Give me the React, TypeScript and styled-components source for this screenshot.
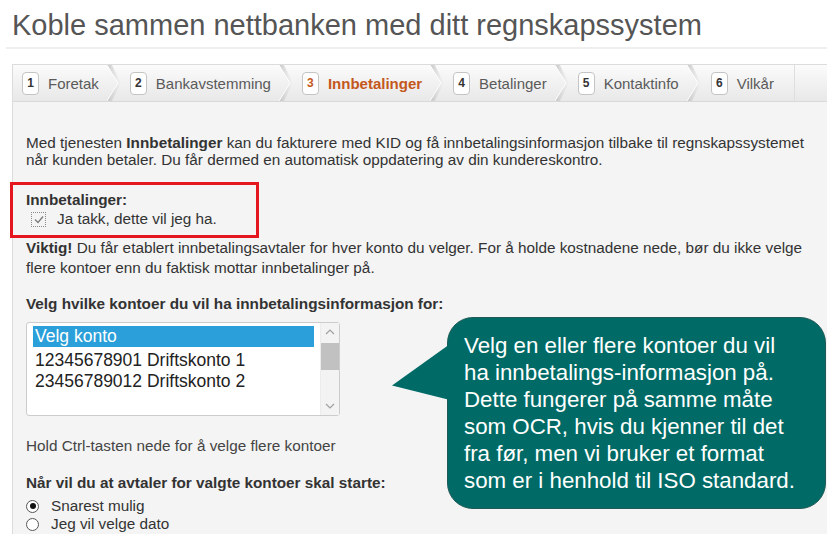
import React from "react";
import styled, { createGlobalStyle } from "styled-components";

const GlobalStyle = createGlobalStyle`
  html, body {
    margin: 0;
    padding: 0;
    background: #ffffff;
    overflow: hidden;
  }
  body {
    font-family: "Liberation Sans", Arial, sans-serif;
    color: #333333;
  }
`;

const Page = styled.div`
  position: relative;
  width: 827px;
  height: 534px;
  overflow: hidden;
`;

const Title = styled.h1`
  margin: 8px 0 0 12px;
  font-size: 29px;
  line-height: 34px;
  font-weight: normal;
  color: #555555;
  white-space: nowrap;
`;

const Rule = styled.div`
  margin: 5px 0 0 6px;
  border-top: 2px solid #efefef;
`;

const Panel = styled.div`
  margin: 15px 0 0 12px;
  background: #f4f4f4;
  border: 1px solid #dcdcdc;
  border-right: none;
  height: 480px;
`;

const TabBar = styled.div`
  display: flex;
  height: 36px;
  background: linear-gradient(#fbfbfb, #e8e8e8);
  border-bottom: 1px solid #d9d9d9;
`;

const Tab = styled.div<{ $last?: boolean }>`
  display: flex;
  align-items: center;
  padding-left: ${p => (p.$last ? "10px" : "9px")};
  padding-right: ${p => (p.$last ? "12px" : "0")};
  border-right: ${p => (p.$last ? "1px solid #dedede" : "none")};
  font-size: 15px;
`;

const Badge = styled.span<{ $active?: boolean }>`
  display: inline-flex;
  align-items: center;
  justify-content: center;
  width: 15px;
  height: 21px;
  border: 1px solid #c4c4c4;
  border-radius: 4px;
  background: #ffffff;
  font-size: 12px;
  font-weight: bold;
  color: ${p => (p.$active ? "#c4581c" : "#333333")};
`;

const TabLabel = styled.span<{ $active?: boolean }>`
  margin-left: 9px;
  margin-right: 8px;
  color: ${p => (p.$active ? "#c4581c" : "#5a5a5a")};
  font-weight: ${p => (p.$active ? "bold" : "normal")};
  white-space: nowrap;
`;

const Chevron = () => (
  <svg width="14" height="36" viewBox="0 0 14 36">
    <defs>
      <linearGradient id="chev" x1="0" x2="1" y1="0" y2="0">
        <stop offset="0" stopColor="#c4c4c4" />
        <stop offset="1" stopColor="#d8d8d8" stopOpacity="0" />
      </linearGradient>
    </defs>
    <path d="M0 0 L11 18 L0 36 L5 36 L14 18 L5 0 Z" fill="url(#chev)" />
    <path d="M0 0 L11 18 L0 36" fill="none" stroke="#fdfdfd" strokeWidth="1" />
  </svg>
);

const Content = styled.div`
  padding: 32px 0 0 13px;
  font-size: 15.3px;
`;

const Para = styled.p<{ $lh?: number }>`
  margin: 0;
  line-height: ${p => p.$lh ?? 17}px;
  white-space: nowrap;
`;

const Highlight = styled.div`
  margin: 14px 0 0 -16px;
  width: 230px;
  border: 3px solid #e5161e;
  padding: 6px 0 5px 13px;
`;

const Heading = styled.div<{ $mt?: number }>`
  margin-top: ${p => p.$mt ?? 0}px;
  font-weight: bold;
  line-height: 17px;
  white-space: nowrap;
`;

const CheckRow = styled.label`
  display: flex;
  align-items: center;
  height: 22px;
  padding-left: 5px;
`;

const CheckBox = styled.span`
  display: inline-flex;
  align-items: center;
  justify-content: center;
  width: 13px;
  height: 13px;
  border: 1px dotted #8a8a8a;
  margin-right: 11px;
`;

const ListBox = styled.div`
  display: flex;
  margin-top: 10px;
  width: 312px;
  height: 92px;
  background: #ffffff;
  border: 1px solid #cccccc;
  border-radius: 3px;
  font-size: 17.5px;
`;

const Options = styled.div`
  flex: 1;
  padding: 3px 6px 0 6px;
`;

const Option = styled.div<{ $selected?: boolean }>`
  height: 21px;
  line-height: 21px;
  padding-left: 2px;
  color: ${p => (p.$selected ? "#ffffff" : "#222222")};
  background: ${p => (p.$selected ? "#2b9fd9" : "transparent")};
  margin-bottom: ${p => (p.$selected ? "3px" : "0")};
  white-space: nowrap;
`;

const ScrollTrack = styled.div`
  display: flex;
  flex-direction: column;
  width: 18px;
  background: #f3f3f3;
  border-left: 1px solid #ececec;
`;

const ScrollArrow = styled.div`
  display: flex;
  align-items: center;
  justify-content: center;
  height: 18px;
`;

const ScrollThumb = styled.div`
  margin-top: 2px;
  height: 27px;
  background: #c1c1c1;
`;

const ScrollGap = styled.div`
  flex: 1;
`;

const Hint = styled.div`
  margin-top: 21px;
  line-height: 17px;
  color: #444444;
  white-space: nowrap;
`;

const RadioGroup = styled.div`
  margin-top: 6px;
`;

const RadioRow = styled.label`
  display: flex;
  align-items: center;
  height: 18px;
`;

const Radio = styled.span<{ $checked?: boolean }>`
  position: relative;
  display: inline-block;
  box-sizing: border-box;
  width: 13px;
  height: 13px;
  border: 1px solid #555555;
  border-radius: 50%;
  background: #ffffff;
  margin-right: 12px;
  &::after {
    content: "";
    display: ${p => (p.$checked ? "block" : "none")};
    position: absolute;
    left: 2.5px;
    top: 2.5px;
    width: 6px;
    height: 6px;
    border-radius: 50%;
    background: #111111;
  }
`;

const Callout = styled.div`
  position: absolute;
  left: 447px;
  top: 317px;
  width: 345px;
  height: 162px;
  padding: 14px 16px 14px 16px;
  background: #006b66;
  border: 1px solid #1f5a57;
  border-radius: 26px;
  color: #ffffff;
  font-size: 22.3px;
  line-height: 27px;
  white-space: nowrap;
  &::before {
    content: "";
    position: absolute;
    left: -56px;
    top: 26px;
    width: 58px;
    height: 56px;
    background: #006b66;
    clip-path: polygon(100% 0, 0 74%, 100% 100%);
  }
`;

const tabs = [
  "Foretak",
  "Bankavstemming",
  "Innbetalinger",
  "Betalinger",
  "Kontaktinfo",
  "Vilkår"
];

export default function App() {
  return (
    <>
      <GlobalStyle />
      <Page>
        <Title>Koble sammen nettbanken med ditt regnskapssystem</Title>
        <Rule />
        <Panel>
          <TabBar>
            {tabs.map((label, i) => {
              const active = i === 2;
              const last = i === tabs.length - 1;
              return (
                <React.Fragment key={label}>
                  <Tab $last={last}>
                    <Badge $active={active}>{i + 1}</Badge>
                    <TabLabel $active={active}>{label}</TabLabel>
                  </Tab>
                  {!last && <Chevron />}
                </React.Fragment>
              );
            })}
          </TabBar>
          <Content>
            <Para>
              Med tjenesten <b>Innbetalinger</b> kan du fakturere med KID og få
              innbetalingsinformasjon tilbake til regnskapssystemet
              <br />
              når kunden betaler. Du får dermed en automatisk oppdatering av din
              kundereskontro.
            </Para>
            <Highlight>
              <Heading>Innbetalinger:</Heading>
              <CheckRow>
                <CheckBox>
                  <svg width="10" height="9" viewBox="0 0 10 9">
                    <path
                      d="M1 4.5 L4 7.5 L9 1.5"
                      fill="none"
                      stroke="#7a7a7a"
                      strokeWidth="1.3"
                    />
                  </svg>
                </CheckBox>
                Ja takk, dette vil jeg ha.
              </CheckRow>
            </Highlight>
            <Para $lh={20}>
              <b>Viktig!</b> Du får etablert innbetalingsavtaler for hver konto
              du velger. For å holde kostnadene nede, bør du ikke velge
              <br />
              flere kontoer enn du faktisk mottar innbetalinger på.
            </Para>
            <Heading $mt={17}>
              Velg hvilke kontoer du vil ha innbetalingsinformasjon for:
            </Heading>
            <ListBox>
              <Options>
                <Option $selected>Velg konto</Option>
                <Option>12345678901 Driftskonto 1</Option>
                <Option>23456789012 Driftskonto 2</Option>
              </Options>
              <ScrollTrack>
                <ScrollArrow>
                  <svg width="10" height="6" viewBox="0 0 10 6">
                    <path d="M1 5 L5 1 L9 5" fill="none" stroke="#a0a0a0" strokeWidth="1.2" />
                  </svg>
                </ScrollArrow>
                <ScrollThumb />
                <ScrollGap />
                <ScrollArrow>
                  <svg width="10" height="6" viewBox="0 0 10 6">
                    <path d="M1 1 L5 5 L9 1" fill="none" stroke="#a0a0a0" strokeWidth="1.2" />
                  </svg>
                </ScrollArrow>
              </ScrollTrack>
            </ListBox>
            <Hint>Hold Ctrl-tasten nede for å velge flere kontoer</Hint>
            <Heading $mt={20}>
              Når vil du at avtaler for valgte kontoer skal starte:
            </Heading>
            <RadioGroup>
              <RadioRow>
                <Radio $checked />
                Snarest mulig
              </RadioRow>
              <RadioRow>
                <Radio />
                Jeg vil velge dato
              </RadioRow>
            </RadioGroup>
          </Content>
        </Panel>
        <Callout>
          Velg en eller flere kontoer du vil
          <br />
          ha innbetalings-informasjon på.
          <br />
          Dette fungerer på samme måte
          <br />
          som OCR, hvis du kjenner til det
          <br />
          fra før, men vi bruker et format
          <br />
          som er i henhold til ISO standard.
        </Callout>
      </Page>
    </>
  );
}
